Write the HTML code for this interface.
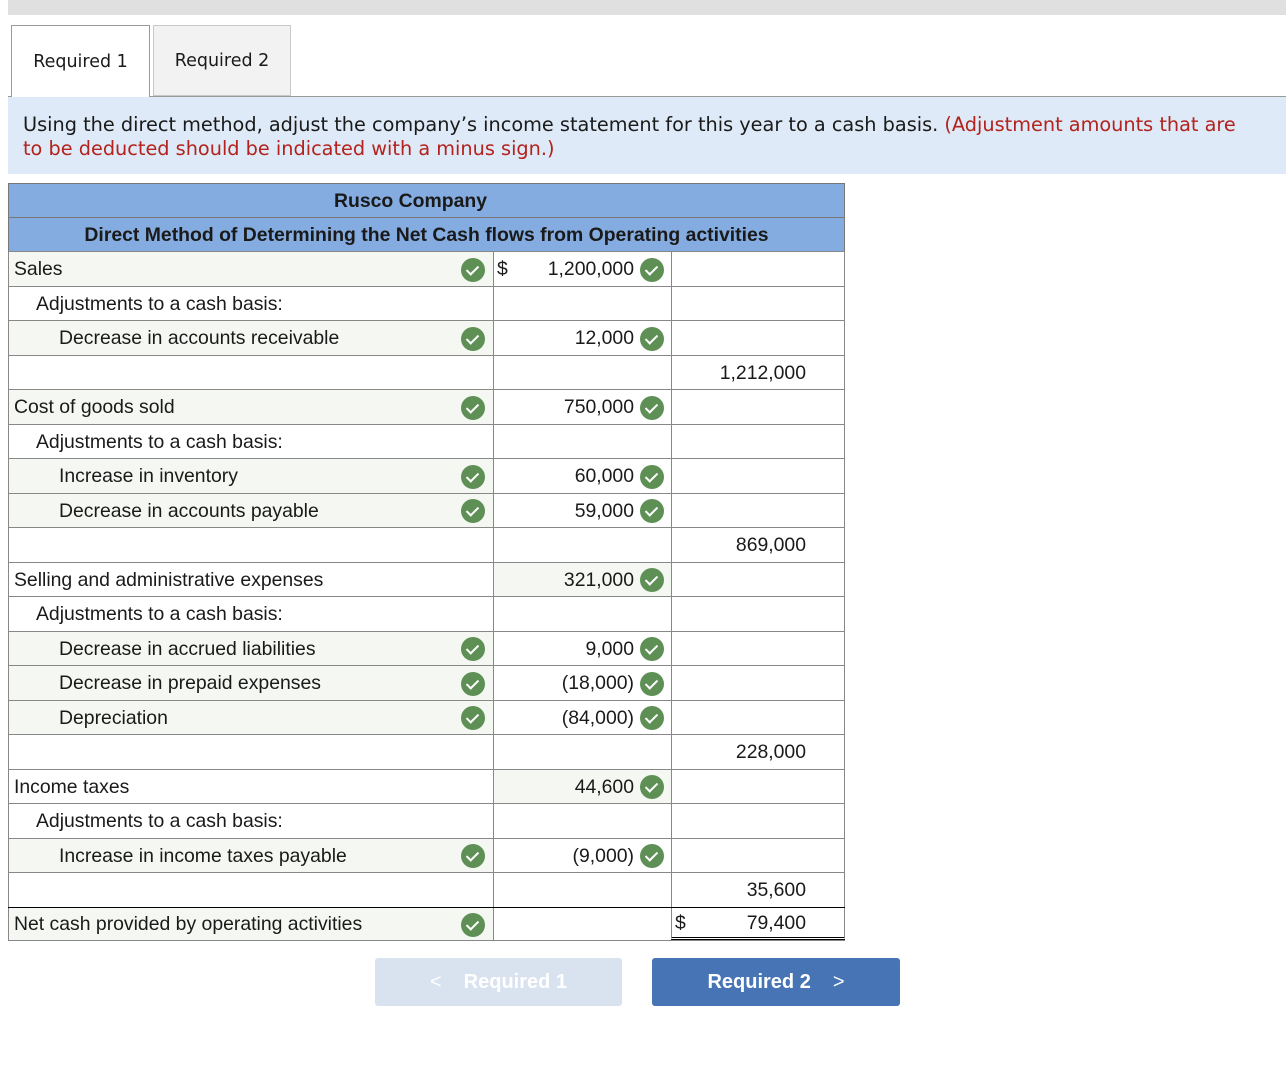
<!DOCTYPE html>
<html><head><style>
*{margin:0;padding:0;box-sizing:border-box}
body{width:1286px;height:1071px;background:#fff;position:relative;font-family:"Liberation Sans",Arial,sans-serif;color:#1a1a1a;overflow:hidden}
.top{position:absolute;left:8px;top:0;width:1278px;height:15px;background:#e0e0e0}
.tab{position:absolute;top:25px;height:71px;border:1px solid #c8c8c8;font-family:"DejaVu Sans",sans-serif;font-size:17.5px;display:flex;align-items:center;justify-content:center}
.instr{position:absolute;left:8px;top:96px;width:1278px;height:78px;background:#deeaf7;border-top:1px solid #999;padding:16px 24px 16px 15px;font-family:"DejaVu Sans",sans-serif;font-size:19.3px;line-height:24px}
.red{color:#b3221c}
.tbl{position:absolute;left:8px;top:183px;width:837px}
.h{height:34px;background:#84ace0;border:1px solid #777;border-bottom:none;font-weight:bold;font-size:19.4px;display:flex;align-items:center;justify-content:center;padding-top:2px}
.r{position:relative;height:34.5px;border-top:1px solid #888;font-size:19.4px}
.c{position:absolute;top:0;bottom:0;display:flex;align-items:center;padding-top:2px}
.l{left:0;width:485px;border-left:1px solid #888;padding-left:5px}
.m{left:485px;width:178px;border-left:1px solid #888;justify-content:flex-end;padding-right:37px}
.x{left:663px;width:174px;border-left:1px solid #888;border-right:1px solid #888;justify-content:flex-end;padding-right:38px}
.g{background:#f5f8f2}
.i1{padding-left:27px}.i2{padding-left:50px}
.ck{position:absolute;width:24px;height:24px;border-radius:50%;background:#5e8f55;top:50%;margin-top:-11px}
.ck:after{content:"";position:absolute;left:8px;top:5px;width:5px;height:10px;border:solid #fff;border-width:0 2.5px 2.5px 0;transform:rotate(45deg)}
.ckl{left:453px}.ckm{left:632px}
.btn{position:absolute;top:958px;height:48px;border-radius:3px;font-weight:bold;font-size:20px;color:#fff;display:flex;align-items:center;justify-content:center}
</style></head><body>
<div class="top"></div>
<div class="tab" style="left:11px;width:139px;background:#fff;border-color:#999;border-bottom:none;height:72px;z-index:2">Required 1</div>
<div class="tab" style="left:153px;width:138px;background:#f2f2f2">Required 2</div>
<div class="instr">Using the direct method, adjust the company’s income statement for this year to a cash basis. <span class="red">(Adjustment amounts that are<br>to be deducted should be indicated with a minus sign.)</span></div>
<div class="tbl">
<div class="h"><span style="position:relative;left:-16px">Rusco Company</span></div>
<div class="h" style="border-top:1px solid #777">Direct Method of Determining the Net Cash flows from Operating activities</div>
<div class="r"><div class="c l g">Sales</div><div class="ck ckl"></div><div class="c m" style="justify-content:space-between;padding-left:3px"><span>$</span><span>1,200,000</span></div><div class="ck ckm"></div><div class="c x"></div></div>
<div class="r"><div class="c l i1">Adjustments to a cash basis:</div><div class="c m"></div><div class="c x"></div></div>
<div class="r"><div class="c l g i2">Decrease in accounts receivable</div><div class="ck ckl"></div><div class="c m">12,000</div><div class="ck ckm"></div><div class="c x"></div></div>
<div class="r"><div class="c l"></div><div class="c m"></div><div class="c x">1,212,000</div></div>
<div class="r"><div class="c l g">Cost of goods sold</div><div class="ck ckl"></div><div class="c m">750,000</div><div class="ck ckm"></div><div class="c x"></div></div>
<div class="r"><div class="c l i1">Adjustments to a cash basis:</div><div class="c m"></div><div class="c x"></div></div>
<div class="r"><div class="c l g i2">Increase in inventory</div><div class="ck ckl"></div><div class="c m">60,000</div><div class="ck ckm"></div><div class="c x"></div></div>
<div class="r"><div class="c l g i2">Decrease in accounts payable</div><div class="ck ckl"></div><div class="c m">59,000</div><div class="ck ckm"></div><div class="c x"></div></div>
<div class="r"><div class="c l"></div><div class="c m"></div><div class="c x">869,000</div></div>
<div class="r"><div class="c l">Selling and administrative expenses</div><div class="c m g">321,000</div><div class="ck ckm"></div><div class="c x"></div></div>
<div class="r"><div class="c l i1">Adjustments to a cash basis:</div><div class="c m"></div><div class="c x"></div></div>
<div class="r"><div class="c l g i2">Decrease in accrued liabilities</div><div class="ck ckl"></div><div class="c m">9,000</div><div class="ck ckm"></div><div class="c x"></div></div>
<div class="r"><div class="c l g i2">Decrease in prepaid expenses</div><div class="ck ckl"></div><div class="c m">(18,000)</div><div class="ck ckm"></div><div class="c x"></div></div>
<div class="r"><div class="c l g i2">Depreciation</div><div class="ck ckl"></div><div class="c m">(84,000)</div><div class="ck ckm"></div><div class="c x"></div></div>
<div class="r"><div class="c l"></div><div class="c m"></div><div class="c x">228,000</div></div>
<div class="r"><div class="c l">Income taxes</div><div class="c m g">44,600</div><div class="ck ckm"></div><div class="c x"></div></div>
<div class="r"><div class="c l i1">Adjustments to a cash basis:</div><div class="c m"></div><div class="c x"></div></div>
<div class="r"><div class="c l g i2">Increase in income taxes payable</div><div class="ck ckl"></div><div class="c m">(9,000)</div><div class="ck ckm"></div><div class="c x"></div></div>
<div class="r"><div class="c l"></div><div class="c m"></div><div class="c x">35,600</div></div>
<div class="r" style="border-top:1px solid #000;border-bottom:1px solid #888"><div class="c l g">Net cash provided by operating activities</div><div class="ck ckl"></div><div class="c m"></div><div class="c x" style="justify-content:space-between;padding-left:3px;border-bottom:3px double #000"><span>$</span><span>79,400</span></div></div>
</div>
<div class="btn" style="left:375px;width:247px;background:#d9e3f0"><span style="font-weight:normal;margin-right:22px">&lt;</span>Required 1</div>
<div class="btn" style="left:652px;width:248px;background:#4674b4">Required 2<span style="font-weight:normal;margin-left:22px">&gt;</span></div>
</body></html>
